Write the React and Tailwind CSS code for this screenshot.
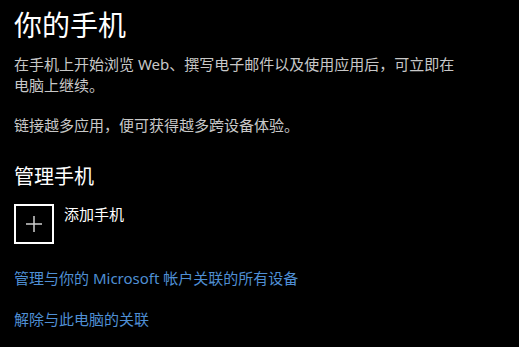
import React from 'react'

const font = { fontFamily: '"Noto Sans", "Noto Sans CJK SC", sans-serif' }

function AddTile({ label }) {
  return (
    <div className="flex items-start gap-[10px]">
      <div className="flex h-[40px] w-[40px] items-center justify-center border-2 border-white">
        <svg width="18" height="18" viewBox="0 0 18 18" className="text-[#d0d0d0]">
          <path d="M9 1v16M1 9h16" stroke="currentColor" strokeWidth="1.5" />
        </svg>
      </div>
      <span className="text-[15px] leading-[21px] text-white">{label}</span>
    </div>
  )
}

export default function App() {
  return (
    <div
      className="h-[347px] w-[519px] overflow-hidden bg-black pl-[14px] pt-[7px] antialiased"
      style={font}
    >
      <h1 className="text-[28px] leading-[36px] font-normal text-white">你的手机</h1>

      <p className="mt-[11px] max-w-[448px] text-[15px] leading-[21px] text-[#c8c8c8]">
        在手机上开始浏览 Web、撰写电子邮件以及使用应用后，可立即在电脑上继续。
      </p>
      <p className="mt-[19px] text-[15px] leading-[21px] text-[#c8c8c8]">
        链接越多应用，便可获得越多跨设备体验。
      </p>

      <h2 className="mt-[27px] text-[20px] leading-[28px] font-normal text-white">管理手机</h2>

      <div className="mt-[13px]">
        <AddTile label="添加手机" />
      </div>

      <div className="mt-[24px] flex flex-col items-start gap-[20px] text-[15px] leading-[21px] text-[#4f8fd4]">
        <a href="#">管理与你的 Microsoft 帐户关联的所有设备</a>
        <a href="#">解除与此电脑的关联</a>
      </div>
    </div>
  )
}
